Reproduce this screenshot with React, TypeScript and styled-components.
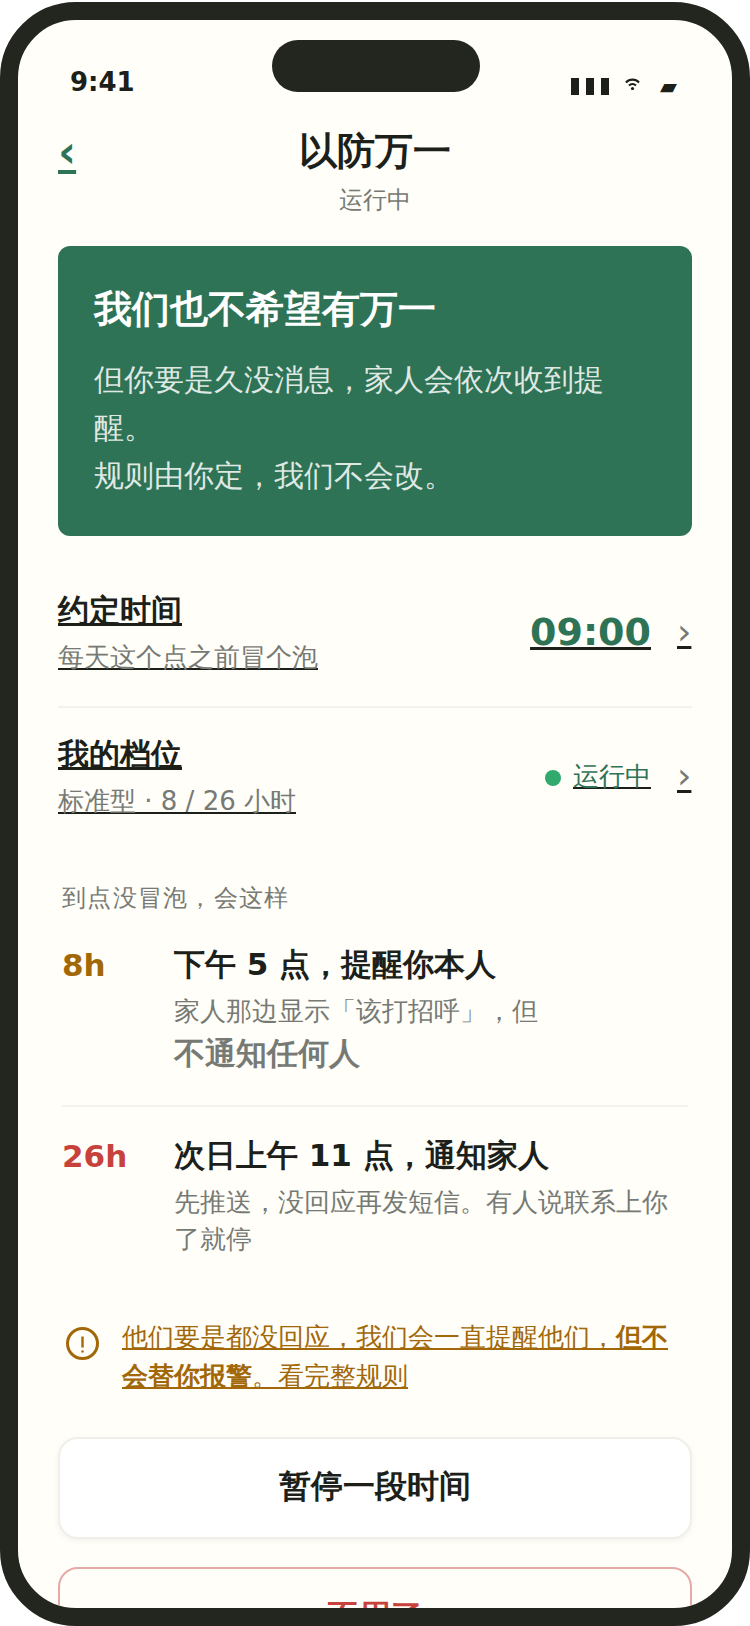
import React from "react";
import styled, { createGlobalStyle } from "styled-components";

const GlobalStyle = createGlobalStyle`
  html, body { margin: 0; padding: 0; background: #fff; }
  body { font-family: "DejaVu Sans", sans-serif; }
  * { box-sizing: border-box; }
`;

const ink = "#1c1f1a";
const gray = "#777a74";
const green = "#2f7356";
const amber = "#a26808";
const red = "#c8423c";

const Shell = styled.div`
  width: 750px;
  height: 1624px;
  margin-top: 2px;
  border: 18px solid #23261f;
  border-radius: 76px;
  background: #fffef9;
  overflow: hidden;
  position: relative;
`;

const Island = styled.div`
  position: absolute;
  top: 20px;
  left: 254px;
  width: 208px;
  height: 52px;
  border-radius: 26px;
  background: #23261f;
`;

const StatusBar = styled.div`
  display: flex;
  justify-content: space-between;
  align-items: flex-start;
  height: 104px;
  padding: 47px 55px 0 52px;
  color: ${ink};
`;

const Clock = styled.div`
  font-size: 26px;
  font-weight: 700;
  line-height: 30px;
`;

const StatusIcons = styled.div`
  display: flex;
  align-items: center;
  height: 20px;
  margin-top: 9px;
  font-size: 22px;
`;

const WifiIcon = styled.svg`
  margin: 0 20px 4px 16px;
`;

const Header = styled.header`
  position: relative;
  padding: 0 40px;
  text-align: center;
`;

const Back = styled.a`
  position: absolute;
  left: 40px;
  top: 0;
  color: ${green};
  font-size: 44px;
  font-weight: 700;
  line-height: 56px;
  text-decoration: underline;
`;

const Title = styled.h1`
  margin: 0;
  padding-top: 1px;
  font-size: 37.5px;
  font-weight: 700;
  line-height: 52px;
  color: ${ink};
`;

const Subtitle = styled.div`
  margin-top: 5px;
  font-size: 24px;
  line-height: 36px;
  color: ${gray};
`;

const Content = styled.main`
  padding: 28px 40px 0;
`;

const Hero = styled.section`
  height: 290px;
  margin-bottom: 28px;
  padding: 37px 36px;
  border-radius: 12px;
  background: ${green};
  color: #fff;
`;

const HeroTitle = styled.h2`
  margin: 0 0 21px;
  font-size: 38px;
  font-weight: 700;
  line-height: 52px;
`;

const HeroText = styled.p`
  margin: 0;
  font-size: 30px;
  line-height: 48px;
  color: rgba(255, 255, 255, 0.85);
`;

const SettingRow = styled.a<{ $last?: boolean }>`
  display: flex;
  justify-content: space-between;
  align-items: center;
  padding: 25px 0 29px;
  color: ${ink};
  text-decoration: underline;
  border-bottom: ${({ $last }) => ($last ? "none" : "2px solid #f3f2ed")};
`;

const RowTitle = styled.div`
  font-size: 30.5px;
  font-weight: 700;
  line-height: 44px;
`;

const RowSub = styled.div`
  margin-top: 4px;
  font-size: 26px;
  line-height: 40px;
  color: ${gray};
`;

const RowRight = styled.div`
  display: flex;
  align-items: center;
  padding-bottom: 2px;
`;

const TimeValue = styled.div`
  font-size: 38px;
  font-weight: 700;
  color: ${green};
`;

const Dot = styled.span`
  width: 16px;
  height: 16px;
  margin: 3px 12px 0 0;
  border-radius: 50%;
  background: #2fa96c;
`;

const StatusValue = styled.div`
  font-size: 26px;
  color: ${green};
`;

const Chevron = styled.div`
  width: 15px;
  margin-left: 26px;
  font-size: 36px;
  line-height: 44px;
  color: ${gray};
`;

const SectionLabel = styled.div`
  margin-top: 30px;
  padding-left: 4px;
  font-size: 24px;
  line-height: 36px;
  letter-spacing: 1.25px;
  color: ${gray};
`;

const Step = styled.div<{ $last?: boolean }>`
  display: grid;
  grid-template-columns: 112px 1fr;
  margin: 0 4px;
  padding: 27px 0 29px;
  border-bottom: ${({ $last }) => ($last ? "none" : "2px solid #f3f2ed")};
`;

const StepHour = styled.div<{ $color: string }>`
  font-size: 31px;
  font-weight: 700;
  line-height: 44px;
  color: ${({ $color }) => $color};
`;

const StepTitle = styled.div`
  font-size: 31px;
  font-weight: 700;
  line-height: 42px;
  color: ${ink};
`;

const StepText = styled.div`
  margin-top: 8px;
  font-size: 26px;
  line-height: 1.45;
  color: ${gray};

  strong {
    font-size: 31px;
    font-weight: 700;
  }
`;

const Notice = styled.a`
  display: flex;
  gap: 23px;
  margin-top: 30px;
  padding-left: 8px;
  font-size: 26px;
  line-height: 39px;
  color: ${amber};
  text-decoration: underline;

  svg {
    flex: none;
    margin-top: 9px;
  }
`;

const Action = styled.button<{ $danger?: boolean }>`
  display: block;
  width: 634px;
  height: 102px;
  padding: 0 0 3px;
  border-radius: 20px;
  font-family: inherit;
  font-size: 32px;
  font-weight: 700;
  background: ${({ $danger }) => ($danger ? "transparent" : "#fff")};
  color: ${({ $danger }) => ($danger ? red : ink)};
  border: 2px solid ${({ $danger }) => ($danger ? "#e5aaa6" : "#f0efea")};
  box-shadow: ${({ $danger }) => ($danger ? "none" : "0 2px 6px rgba(0, 0, 0, 0.05)")};
`;

const Actions = styled.div`
  display: flex;
  flex-direction: column;
  gap: 28px;
  margin-top: 41px;
`;

const App = () => (
  <>
    <GlobalStyle />
    <Shell>
      <Island />
      <StatusBar>
        <Clock>9:41</Clock>
        <StatusIcons>
          <svg width="38" height="17" viewBox="0 0 38 17" fill={ink}>
            <rect x="0" width="8" height="17" />
            <rect x="15" width="8" height="17" />
            <rect x="30" width="8" height="17" />
          </svg>
          <WifiIcon width="15" height="12" viewBox="0 0 15 12" fill="none" stroke={ink} strokeWidth="2.2">
            <path d="M1 4.5a9 9 0 0 1 13 0" />
            <path d="M4 7.5a5 5 0 0 1 7 0" />
            <circle cx="7.5" cy="10.5" r="1.6" fill={ink} stroke="none" />
          </WifiIcon>
          <span>▰</span>
        </StatusIcons>
      </StatusBar>
      <Header>
        <Back>‹</Back>
        <Title>以防万一</Title>
        <Subtitle>运行中</Subtitle>
      </Header>
      <Content>
        <Hero>
          <HeroTitle>我们也不希望有万一</HeroTitle>
          <HeroText>
            但你要是久没消息，家人会依次收到提醒。
            <br />
            规则由你定，我们不会改。
          </HeroText>
        </Hero>
        <SettingRow>
          <div>
            <RowTitle>约定时间</RowTitle>
            <RowSub>每天这个点之前冒个泡</RowSub>
          </div>
          <RowRight>
            <TimeValue>09:00</TimeValue>
            <Chevron>›</Chevron>
          </RowRight>
        </SettingRow>
        <SettingRow $last>
          <div>
            <RowTitle>我的档位</RowTitle>
            <RowSub>标准型 · 8 / 26 小时</RowSub>
          </div>
          <RowRight>
            <Dot />
            <StatusValue>运行中</StatusValue>
            <Chevron>›</Chevron>
          </RowRight>
        </SettingRow>
        <SectionLabel>到点没冒泡，会这样</SectionLabel>
        <Step>
          <StepHour $color={amber}>8h</StepHour>
          <div>
            <StepTitle>下午 5 点，提醒你本人</StepTitle>
            <StepText>
              家人那边显示「该打招呼」，但
              <br />
              <strong>不通知任何人</strong>
            </StepText>
          </div>
        </Step>
        <Step $last>
          <StepHour $color={red}>26h</StepHour>
          <div>
            <StepTitle>次日上午 11 点，通知家人</StepTitle>
            <StepText>先推送，没回应再发短信。有人说联系上你了就停</StepText>
          </div>
        </Step>
        <Notice>
          <svg width="33" height="33" viewBox="0 0 33 33" fill="none" stroke={amber} strokeWidth="3">
            <circle cx="16.5" cy="16.5" r="15" />
            <path d="M16.5 9.5v11" strokeWidth="2.4" />
            <circle cx="16.5" cy="24.5" r="1.2" fill={amber} stroke="none" />
          </svg>
          <span>
            他们要是都没回应，我们会一直提醒他们，<b>但不会替你报警</b>。看完整规则
          </span>
        </Notice>
        <Actions>
          <Action>暂停一段时间</Action>
          <Action $danger>不用了</Action>
        </Actions>
      </Content>
    </Shell>
  </>
);

export default App;
